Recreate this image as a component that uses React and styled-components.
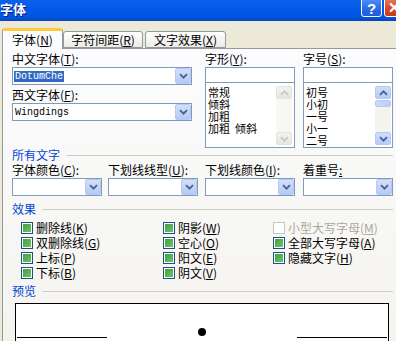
import styled, { createGlobalStyle } from 'styled-components';

const GlobalStyle = createGlobalStyle`
  html, body {
    margin: 0;
    padding: 0;
    overflow: hidden;
    background: #ece9d8;
  }
  body {
    font-family: "Noto Sans CJK SC", "Liberation Sans", sans-serif;
    font-size: 12px;
    line-height: 14px;
    color: #000;
  }
`;

const Window = styled.div`
  width: 410px;
  height: 341px;
  overflow: hidden;
  background: #ece9d8;
`;

const TitleBar = styled.div`
  height: 21px;
  display: flex;
  align-items: flex-start;
  padding-right: 5px;
  overflow: hidden;
  background: linear-gradient(to bottom, #0b61ec 0%, #0058e6 55%, #0153dc 85%, #0345bb 100%);
`;

const Title = styled.div`
  flex: 1;
  color: #fff;
  font-weight: bold;
  font-size: 13px;
  line-height: 18px;
  text-shadow: 1px 1px #0a1e7a;
`;

const CapButton = styled.div`
  width: 21px;
  height: 21px;
  margin-top: -4px;
  box-sizing: border-box;
  border: 1px solid #fff;
  border-radius: 3px;
  display: flex;
  align-items: center;
  justify-content: center;
  padding-top: 3px;
  color: #fff;
  font: bold 15px "Liberation Sans", sans-serif;
  background: ${(p) =>
    p.$close
      ? 'linear-gradient(to bottom, #e8876a, #d9461f 60%, #c73a17)'
      : 'linear-gradient(to bottom, #5a98f8, #2a6cea 60%, #1e5bd6)'};
  & + & {
    margin-left: 2px;
  }
`;

const TabStrip = styled.div`
  height: 27px;
  display: flex;
  align-items: flex-end;
  padding-left: 2px;
  position: relative;
  z-index: 1;
`;

const Tab = styled.div`
  box-sizing: border-box;
  width: ${(p) => p.$w}px;
  height: ${(p) => (p.$active ? 21 : 17)}px;
  margin-left: ${(p) => p.$gap || 0}px;
  margin-bottom: ${(p) => (p.$active ? -1 : 0)}px;
  border: 1px solid #919b9c;
  border-top: ${(p) => (p.$active ? '3px solid #ffc83c' : '1px solid #919b9c')};
  border-bottom: ${(p) => (p.$active ? 'none' : '1px solid #919b9c')};
  border-radius: 3px 3px 0 0;
  background: ${(p) => (p.$active ? '#fcfcfe' : 'linear-gradient(to bottom, #ffffff, #ecebe6)')};
  display: flex;
  align-items: center;
  justify-content: center;
  line-height: 14px;
  white-space: nowrap;
`;

const Panel = styled.div`
  box-sizing: border-box;
  margin-left: 2px;
  width: 404px;
  height: 300px;
  border: 1px solid #919b9c;
  background: linear-gradient(to bottom, #fcfcfe, #f4f3ee);
  padding: 3px 0 0 9px;
`;

const TopRow = styled.div`
  display: grid;
  grid-template-columns: 193px 98px 90px;
  align-items: start;
`;

const Column = styled.div`
  display: flex;
  flex-direction: column;
`;

const FieldLabel = styled.div`
  height: 14px;
  line-height: 14px;
  margin-top: ${(p) => p.$mt || 0}px;
  margin-bottom: 1px;
  white-space: nowrap;
`;

const Mn = styled.span`
  text-decoration: underline;
`;

const ComboBox = styled.div`
  box-sizing: border-box;
  width: ${(p) => p.$w}px;
  height: 18px;
  border: 1px solid #7f9db9;
  background: #fff;
  display: flex;
  align-items: center;
`;

const ComboValue = styled.div`
  flex: 1;
  padding-left: ${(p) => (p.$plain ? 2 : 1)}px;
  font: 10px "Liberation Mono", monospace;
  line-height: 13px;
  white-space: nowrap;
`;

const Selected = styled.span`
  background: #316ac5;
  color: #fff;
  padding: 0 1px;
`;

const DropBtn = styled.div`
  box-sizing: border-box;
  width: 16px;
  height: 16px;
  border: 1px solid #b5c8f4;
  border-radius: 2px;
  background: linear-gradient(to bottom, #d2defc, #b6c9f8);
  display: flex;
  align-items: center;
  justify-content: center;
`;

const TextBox = styled.div`
  box-sizing: border-box;
  width: 90px;
  height: 16px;
  border: 1px solid #7f9db9;
  background: #fff;
`;

const ListBox = styled.div`
  box-sizing: border-box;
  width: 90px;
  height: 65px;
  border: 1px solid #7f9db9;
  border-top: none;
  background: #fff;
  display: flex;
`;

const ListItems = styled.div`
  flex: 1;
  padding: 3px 0 0 2px;
  font-size: 11px;
  line-height: 12px;
  white-space: pre;
  overflow: hidden;
`;

const ScrollBar = styled.div`
  width: 16px;
  padding: 3px ${(p) => (p.$enabled ? 1 : 2)}px 2px 0;
  display: flex;
  flex-direction: column;
`;

const ScrollBtn = styled.div`
  box-sizing: border-box;
  height: 13px;
  border: 1px solid ${(p) => (p.$enabled ? '#b4c8f6' : '#e3e2dc')};
  border-radius: 2px;
  background: ${(p) =>
    p.$enabled ? 'linear-gradient(to bottom, #d0dcfc, #b7c9f7)' : 'linear-gradient(to bottom, #f3f3f0, #e6e6e1)'};
  display: flex;
  align-items: center;
  justify-content: center;
`;

const Thumb = styled.div`
  box-sizing: border-box;
  height: 7px;
  margin-top: 1px;
  border: 1px solid #b4c8f6;
  border-radius: 2px;
  background: linear-gradient(to right, #cad8fc, #bccdf9);
`;

const Track = styled.div`
  flex: 1;
  background: ${(p) => (p.$enabled ? '#f4f3ee' : '#f7f7f4')};
`;

const GroupHeader = styled.div`
  width: 381px;
  height: 14px;
  line-height: 14px;
  margin-top: ${(p) => p.$mt || 0}px;
  display: flex;
  align-items: center;
  color: #0046d5;
  &::after {
    content: '';
    flex: 1;
    margin-left: 6px;
    border-top: 1px solid #d0d0bf;
  }
`;

const FormatRow = styled.div`
  margin-top: 1px;
  display: grid;
  grid-template-columns: 96px 97px 98px 90px;
`;

const EffectGrid = styled.div`
  margin-top: 4px;
  padding-left: 9px;
  display: grid;
  grid-template-columns: 142px 110px 120px;
  grid-template-rows: repeat(4, 15px);
  grid-auto-flow: column;
`;

const Check = styled.div`
  display: flex;
  align-items: center;
  gap: 3px;
  line-height: 14px;
  white-space: nowrap;
  color: ${(p) => (p.$disabled ? '#aca899' : '#000')};
`;

const CheckBox = styled.div`
  box-sizing: border-box;
  width: 12px;
  height: 12px;
  border: 1px solid ${(p) => (p.$disabled ? '#cac8bb' : '#1c5180')};
  background: #fff;
  display: flex;
  align-items: center;
  justify-content: center;
  &::after {
    content: '';
    display: ${(p) => (p.$disabled ? 'none' : 'block')};
    width: 8px;
    height: 8px;
    background: linear-gradient(135deg, #3da23d, #6cc36c);
  }
`;

const Preview = styled.div`
  box-sizing: border-box;
  margin: 5px 0 0 3px;
  width: 374px;
  height: 60px;
  border: 1px solid #000;
  background: #fff;
  padding-top: 24px;
`;

const PreviewRow = styled.div`
  height: 10px;
  display: flex;
  align-items: flex-end;
`;

const BaseLine = styled.div`
  width: 90px;
  margin: 0 1px;
  border-bottom: 1px solid #000;
`;

const Gap = styled.div`
  flex: 1;
`;

const Dot = styled.div`
  width: 8px;
  height: 8px;
  margin-bottom: 2px;
  border-radius: 50%;
  background: #000;
`;

function Chevron({ up, color = '#4d6185' }) {
  return (
    <svg width="9" height="6" viewBox="0 0 9 6">
      <path
        d={up ? 'M1 4.8 L4.5 1.3 L8 4.8' : 'M1 1.2 L4.5 4.7 L8 1.2'}
        fill="none"
        stroke={color}
        strokeWidth="1.8"
      />
    </svg>
  );
}

function Combo({ w, plain, children }) {
  return (
    <ComboBox $w={w}>
      <ComboValue $plain={plain}>{children}</ComboValue>
      <DropBtn>
        <Chevron />
      </DropBtn>
    </ComboBox>
  );
}

function List({ items, enabled }) {
  const arrow = enabled ? '#4d6185' : '#c9c8c0';
  return (
    <ListBox>
      <ListItems>{items.join('\n')}</ListItems>
      <ScrollBar $enabled={enabled}>
        <ScrollBtn $enabled={enabled}>
          <Chevron up color={arrow} />
        </ScrollBtn>
        {enabled && <Thumb />}
        <Track $enabled={enabled} />
        <ScrollBtn $enabled={enabled}>
          <Chevron color={arrow} />
        </ScrollBtn>
      </ScrollBar>
    </ListBox>
  );
}

const formats = [
  ['字体颜色', 'C'],
  ['下划线线型', 'U'],
  ['下划线颜色', 'I'],
];

const effects = [
  ['删除线', 'K'],
  ['双删除线', 'G'],
  ['上标', 'P'],
  ['下标', 'B'],
  ['阴影', 'W'],
  ['空心', 'O'],
  ['阳文', 'E'],
  ['阴文', 'V'],
  ['小型大写字母', 'M', true],
  ['全部大写字母', 'A'],
  ['隐藏文字', 'H'],
];

export default function App() {
  return (
    <>
      <GlobalStyle />
      <Window>
        <TitleBar>
          <Title>字体</Title>
          <CapButton>?</CapButton>
          <CapButton $close>✕</CapButton>
        </TitleBar>

        <TabStrip>
          <Tab $w={61} $active>
            字体(<Mn>N</Mn>)
          </Tab>
          <Tab $w={80}>
            字符间距(<Mn>R</Mn>)
          </Tab>
          <Tab $w={81} $gap={2}>
            文字效果(<Mn>X</Mn>)
          </Tab>
        </TabStrip>

        <Panel>
          <TopRow>
            <Column>
              <FieldLabel>
                中文字体(<Mn>T</Mn>):
              </FieldLabel>
              <Combo w={180}>
                <Selected>DotumChe</Selected>
              </Combo>
              <FieldLabel $mt={3}>
                西文字体(<Mn>F</Mn>):
              </FieldLabel>
              <Combo w={180} plain>
                Wingdings
              </Combo>
            </Column>
            <Column>
              <FieldLabel>
                字形(<Mn>Y</Mn>):
              </FieldLabel>
              <TextBox />
              <List items={['常规', '倾斜', '加粗', '加粗  倾斜']} />
            </Column>
            <Column>
              <FieldLabel>
                字号(<Mn>S</Mn>):
              </FieldLabel>
              <TextBox />
              <List items={['初号', '小初', '一号', '小一', '二号']} enabled />
            </Column>
          </TopRow>

          <GroupHeader>所有文字</GroupHeader>
          <FormatRow>
            {formats.map(([label, key]) => (
              <Column key={key}>
                <FieldLabel>
                  {label}(<Mn>{key}</Mn>):
                </FieldLabel>
                <Combo w={90} />
              </Column>
            ))}
            <Column>
              <FieldLabel>
                着重号<Mn>:</Mn>
              </FieldLabel>
              <Combo w={90} />
            </Column>
          </FormatRow>

          <GroupHeader $mt={6}>效果</GroupHeader>
          <EffectGrid>
            {effects.map(([label, key, disabled]) => (
              <Check key={key} $disabled={disabled}>
                <CheckBox $disabled={disabled} />
                <span>
                  {label}(<Mn>{key}</Mn>)
                </span>
              </Check>
            ))}
          </EffectGrid>

          <GroupHeader $mt={4}>预览</GroupHeader>
          <Preview>
            <PreviewRow>
              <BaseLine />
              <Gap />
              <Dot />
              <Gap />
              <BaseLine />
            </PreviewRow>
          </Preview>
        </Panel>
      </Window>
    </>
  );
}
